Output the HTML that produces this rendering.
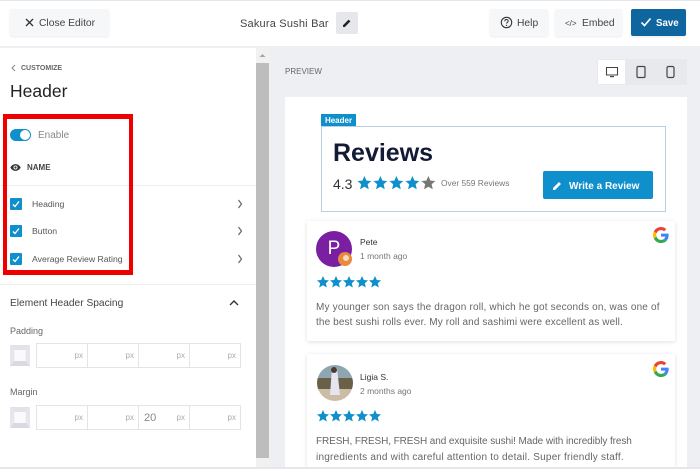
<!DOCTYPE html>
<html><head><meta charset="utf-8"><style>
*{box-sizing:border-box}
html,body{margin:0;padding:0;overflow:hidden;width:700px;height:469px}
body{position:relative;background:#fff;font-family:"Liberation Sans",sans-serif;color:#333}
.a{position:absolute;white-space:nowrap}
.btn{position:absolute;top:9px;height:27px;background:#f6f7f9;border-radius:2px;box-shadow:0 1px 2px rgba(0,0,0,.08);color:#444}
.btn span{position:absolute;top:1px;line-height:28px;font-size:10.3px}
.lbl{font-size:8.7px;color:#555;left:32px;line-height:12px}
.cb{position:absolute;left:10px;width:12px;height:12px;background:#0f8fcb;border-radius:1px}
.inp{position:absolute;left:36px;width:205px;height:25px;border:1px solid #e3e4e8;display:flex}
.inp div{flex:1;border-right:1px solid #e3e4e8;font-size:8px;color:#aaa;text-align:right;padding-right:4px;line-height:23px;position:relative}
.inp div:last-child{border-right:0}
.card{position:absolute;left:307px;width:368px;background:#fff;box-shadow:0 1px 5px rgba(0,0,0,.13);border-radius:2px}
.txt{font-size:10px;color:#666;left:316px;line-height:16px}
</style></head><body>
<svg width="0" height="0" style="position:absolute"><defs>
<path id="s" d="M6 0l1.800 4 4.200.4-3.200 2.800 1 4.300L6 9.300 2.200 11.500l1-4.300L0 4.400 4.200 4z"/>
<g id="g"><path fill="#EA4335" d="M24 9.500c3.500 0 6.700 1.300 9.100 3.500l6.800-6.800C35.800 2.400 30.200 0 24 0 14.600 0 6.500 5.400 2.600 13.200l7.900 6.100C12.400 13.700 17.700 9.500 24 9.500z"/><path fill="#4285F4" d="M47 24.500c0-1.600-.2-3.100-.4-4.500H24v9h12.900c-.6 3-2.200 5.500-4.700 7.200l7.700 6C44.400 38 47 31.800 47 24.500z"/><path fill="#FBBC05" d="M10.500 28.700c-.5-1.400-.8-3-.8-4.700s.3-3.200.8-4.700l-7.900-6.100C.9 16.500 0 20.100 0 24s.9 7.500 2.600 10.800z"/><path fill="#34A853" d="M24 48c6.500 0 11.900-2.100 15.900-5.800l-7.700-6c-2.200 1.400-4.900 2.300-8.200 2.300-6.300 0-11.600-4.200-13.500-9.800l-7.900 6.100C6.500 42.600 14.600 48 24 48z"/></g>
<g id="f"><path d="M0 0h20v21H0z" fill="#eeeef2"/><path d="M0 0h20l-4 5H4z" fill="#e2e2e9"/><path d="M0 21h20l-4-5H4z" fill="#d9d9e1"/><path d="M0 0l4 5v11l-4 5z" fill="#e6e6ec"/><path d="M20 0l-4 5v11l4 5z" fill="#e6e6ec"/><path d="M4.500 5h11v11h-11z" fill="#fafafc"/></g>
</defs></svg>
<div class="a" style="left:0;top:0;width:700px;height:1px;background:#e6e6e8"></div>
<div class="a" style="left:0;top:46px;width:700px;height:423px;background:#eeeff2"></div>
<div class="btn" style="left:10px;width:99px"><svg class="a" style="left:14px;top:8px" width="11" height="11" viewBox="0 0 11 11"><path d="M2 2l7 7M9 2l-7 7" stroke="#333" stroke-width="1.300"/></svg><span style="left:29px">Close Editor</span></div>
<div class="a" style="left:240px;top:17px;font-size:11px;line-height:15px;color:#444;letter-spacing:.2px">Sakura Sushi Bar</div>
<div class="a" style="left:336px;top:12px;width:22px;height:22px;background:#e6e7eb;border-radius:2px"></div>
<svg class="a" style="left:342px;top:18px" width="10" height="10" viewBox="0 0 10 10"><path d="M1 9V7.200L6.600 1.600l1.800 1.800L2.800 9z" fill="#222"/></svg>
<div class="btn" style="left:490px;width:58px"><svg class="a" style="left:10px;top:7px" width="13" height="13" viewBox="0 0 13 13"><circle cx="6.500" cy="6.500" r="5.200" fill="none" stroke="#333" stroke-width="1.100"/><path d="M4.800 5.200c0-2.200 3.400-2.200 3.400-.1 0 1.200-1.600 1.200-1.600 2.500" fill="none" stroke="#333"/><circle cx="6.500" cy="9.400" r=".7" fill="#333"/></svg><span style="left:27px">Help</span></div>
<div class="btn" style="left:555px;width:67px"><span style="left:10px;font-size:8px">&lt;/&gt;</span><span style="left:27px">Embed</span></div>
<div class="btn" style="left:631px;width:55px;background:#0f669f;color:#fff;font-weight:bold"><svg class="a" style="left:9px;top:7px" width="12" height="12" viewBox="0 0 12 12"><path d="M1.500 6.500l3 3 6-7" fill="none" stroke="#fff" stroke-width="1.700"/></svg><span style="left:25px;font-size:9.700px">Save</span></div>

<div class="a" style="left:0;top:48px;width:256px;height:419px;background:#fff"></div>
<div class="a" style="left:256px;top:48px;width:14px;height:419px;background:#f1f1f2"></div>
<div class="a" style="left:256px;top:63px;width:13px;height:395px;background:#bdbdbd"></div>
<svg class="a" style="left:259px;top:53px" width="7" height="5"><path d="M3.500 1L6.500 4H.5z" fill="#a5a5a5"/></svg>
<svg class="a" style="left:10px;top:64px" width="6" height="8" viewBox="0 0 6 8"><path d="M5 1L2 4l3 3" fill="none" stroke="#888"/></svg>
<div class="a" style="left:21px;top:62px;font-size:7px;line-height:13px;color:#666;font-weight:bold">CUSTOMIZE</div>
<div class="a" style="left:10px;top:80px;font-size:17.500px;line-height:22px;color:#222">Header</div>

<div class="a" style="left:10px;top:129px;width:21px;height:12px;border-radius:6px;background:#0f8fcb"></div>
<div class="a" style="left:20px;top:130px;width:10px;height:10px;border-radius:50%;background:#fff"></div>
<div class="a" style="left:38px;top:128px;font-size:10px;line-height:15px;color:#888">Enable</div>
<svg class="a" style="left:10px;top:163px" width="11" height="9" viewBox="0 0 11 9"><path d="M.3 4.500C2.800 0 8.200 0 10.700 4.500 8.200 9 2.800 9 .3 4.500z" fill="#333"/><circle cx="5.500" cy="4.500" r="2" fill="#fff"/><circle cx="5.500" cy="4.500" r="1.100" fill="#333"/></svg>
<div class="a" style="left:27px;top:162px;font-size:8px;line-height:11px;font-weight:bold;color:#444">NAME</div>
<div class="a" style="left:0;top:185px;width:256px;height:1px;background:#eceded"></div>
<div class="cb" style="top:198px"></div><div class="cb" style="top:225px"></div><div class="cb" style="top:253px"></div>
<svg class="a" style="left:10px;top:198px" width="12" height="68" viewBox="0 0 12 68"><path d="M3 6.500l2 2 4-5M3 33.500l2 2 4-5M3 61.500l2 2 4-5" fill="none" stroke="#fff" stroke-width="1.400"/></svg>
<div class="a lbl" style="top:198px">Heading</div>
<div class="a lbl" style="top:225px">Button</div>
<div class="a lbl" style="top:253px">Average Review Rating</div>
<svg class="a" style="left:237px;top:198px" width="6" height="68" viewBox="0 0 6 68"><path d="M1.500 2l3 4-3 4M1.500 29l3 4-3 4M1.500 57l3 4-3 4" fill="none" stroke="#666" stroke-width="1.200"/></svg>
<div class="a" style="left:3px;top:114px;width:130px;height:161px;border:solid #ee0000;border-width:5px 4px 5px 4px"></div>
<div class="a" style="left:0;top:284px;width:256px;height:1px;background:#eceded"></div>
<div class="a" style="left:10px;top:296px;font-size:10.200px;line-height:15px;color:#444">Element Header Spacing</div>
<svg class="a" style="left:229px;top:299px" width="10" height="7" viewBox="0 0 10 7"><path d="M1 6l4-4 4 4" fill="none" stroke="#333" stroke-width="1.400"/></svg>
<div class="a" style="left:10px;top:325px;font-size:9px;line-height:13px;color:#666">Padding</div>
<svg class="a" style="left:10px;top:345px" width="20" height="21"><use href="#f"/></svg>
<div class="inp" style="top:343px"><div>px</div><div>px</div><div>px</div><div>px</div></div>
<div class="a" style="left:10px;top:386px;font-size:9px;line-height:13px;color:#666">Margin</div>
<svg class="a" style="left:10px;top:407px" width="20" height="21"><use href="#f"/></svg>
<div class="inp" style="top:405px"><div>px</div><div>px</div><div>px<span class="a" style="left:5px;top:0;font-size:11px;line-height:24px;color:#888">20</span></div><div>px</div></div>

<div class="a" style="left:285px;top:66px;font-size:8px;line-height:12px;color:#666">PREVIEW</div>
<div class="a" style="left:597px;top:59px;width:90px;height:26px;background:#e8e9ec;border-radius:2px"></div>
<div class="a" style="left:598px;top:60px;width:27px;height:24px;background:#fff"></div>
<svg class="a" style="left:605px;top:66px" width="14" height="12" viewBox="0 0 14 12"><path d="M1.500 1.500h11v7.500h-11z" fill="none" stroke="#444" stroke-width="1.100"/><path d="M5 10h4v1.200H5z" fill="#444"/></svg>
<svg class="a" style="left:636px;top:65px" width="10" height="14" viewBox="0 0 10 14"><rect x="1" y="1.500" width="8" height="11" rx="1" fill="none" stroke="#444" stroke-width="1.200"/></svg>
<svg class="a" style="left:666px;top:65px" width="9" height="14" viewBox="0 0 9 14"><rect x="1" y="1.500" width="7" height="11" rx="1.500" fill="none" stroke="#444" stroke-width="1.200"/></svg>

<div class="a" style="left:285px;top:97px;width:402px;height:372px;background:#fff"></div>
<div class="a" style="left:321px;top:114px;width:35px;height:13px;background:#0f8fcb;color:#fff;font-size:8px;font-weight:bold;line-height:13px;text-align:center">Header</div>
<div class="a" style="left:321px;top:126px;width:345px;height:86px;border:1px solid #b9cfe6"></div>
<div class="a" style="left:333px;top:136px;font-size:25px;line-height:34px;font-weight:bold;color:#131a35">Reviews</div>
<div class="a" style="left:333px;top:174px;font-size:14px;line-height:20px;color:#333">4.3</div>
<svg class="a" style="left:357px;top:176px" width="80" height="14" viewBox="0 0 80 14"><g fill="#0f8fcb"><use href="#s" transform="translate(0.500,0) scale(1.150)"/><use href="#s" transform="translate(16.500,0) scale(1.150)"/><use href="#s" transform="translate(32.500,0) scale(1.150)"/><use href="#s" transform="translate(48.500,0) scale(1.150)"/></g><use href="#s" transform="translate(64.500,0) scale(1.150)" fill="#777"/></svg>
<div class="a" style="left:441px;top:177px;font-size:8.400px;line-height:13px;color:#777">Over 559 Reviews</div>
<div class="a" style="left:543px;top:171px;width:110px;height:28px;background:#0f8fcb;border-radius:2px"></div>
<svg class="a" style="left:552px;top:180px" width="11" height="11" viewBox="0 0 11 11"><path d="M1 10V8l6-6 2 2-6 6z" fill="#fff"/></svg>
<div class="a" style="left:569px;top:179px;font-size:10px;line-height:15px;font-weight:bold;color:#fff">Write a Review</div>

<div class="card" style="top:221px;height:120px"></div>
<div class="a" style="left:316px;top:231px;width:36px;height:36px;border-radius:50%;background:#7b1fa2;color:#fff;font-size:19px;line-height:36px;text-align:center">P</div>
<div class="a" style="left:338px;top:252px;width:14px;height:14px;border-radius:50%;background:#e98a3c"></div>
<div class="a" style="left:343px;top:255px;width:6px;height:6px;background:#f8dcc0;border-radius:50%"></div>
<div class="a" style="left:360px;top:236px;font-size:8.500px;line-height:13px;color:#333">Pete</div>
<div class="a" style="left:360px;top:250px;font-size:8.500px;line-height:13px;color:#777">1 month ago</div>
<svg class="a" style="left:317px;top:276px" width="64" height="12" viewBox="0 0 64 12" fill="#0f8fcb"><use href="#s"/><use href="#s" x="13"/><use href="#s" x="26"/><use href="#s" x="39"/><use href="#s" x="52"/></svg>
<div class="a txt" style="top:300px;letter-spacing:.18px">My younger son says the dragon roll, which he got seconds on, was one of</div>
<div class="a txt" style="top:315px;letter-spacing:.12px">the best sushi rolls ever. My roll and sashimi were excellent as well.</div>

<div class="card" style="top:354px;height:113px"></div>
<svg class="a" style="left:317px;top:365px" width="36" height="36" viewBox="0 0 36 36"><defs><clipPath id="c"><circle cx="18" cy="18" r="18"/></clipPath></defs><g clip-path="url(#c)"><path d="M0 0h36v13H0z" fill="#8fa6b0"/><path d="M0 13h36v11H0z" fill="#6a6048"/><path d="M0 24h36v12H0z" fill="#cbbca6"/><path d="M15 3h5l3 27h-10z" fill="#e6e4ee"/><circle cx="17" cy="5" r="3" fill="#4a3a36"/></g></svg>
<div class="a" style="left:360px;top:371px;font-size:8.500px;line-height:13px;color:#333">Ligia S.</div>
<div class="a" style="left:360px;top:385px;font-size:8.500px;line-height:13px;color:#777">2 months ago</div>
<svg class="a" style="left:317px;top:410px" width="64" height="12" viewBox="0 0 64 12" fill="#0f8fcb"><use href="#s"/><use href="#s" x="13"/><use href="#s" x="26"/><use href="#s" x="39"/><use href="#s" x="52"/></svg>
<div class="a txt" style="top:434px;letter-spacing:-.09px">FRESH, FRESH, FRESH and exquisite sushi! Made with incredibly fresh</div>
<div class="a txt" style="top:450px;letter-spacing:.22px">ingredients and with careful attention to detail. Super friendly staff.</div>

<svg class="a" style="left:653px;top:227px" width="16" height="16" viewBox="0 0 48 48"><use href="#g"/></svg>
<svg class="a" style="left:653px;top:361px" width="16" height="16" viewBox="0 0 48 48"><use href="#g"/></svg>
<div class="a" style="left:0;top:467px;width:700px;height:2px;background:#e6e7ea"></div>
</body></html>
